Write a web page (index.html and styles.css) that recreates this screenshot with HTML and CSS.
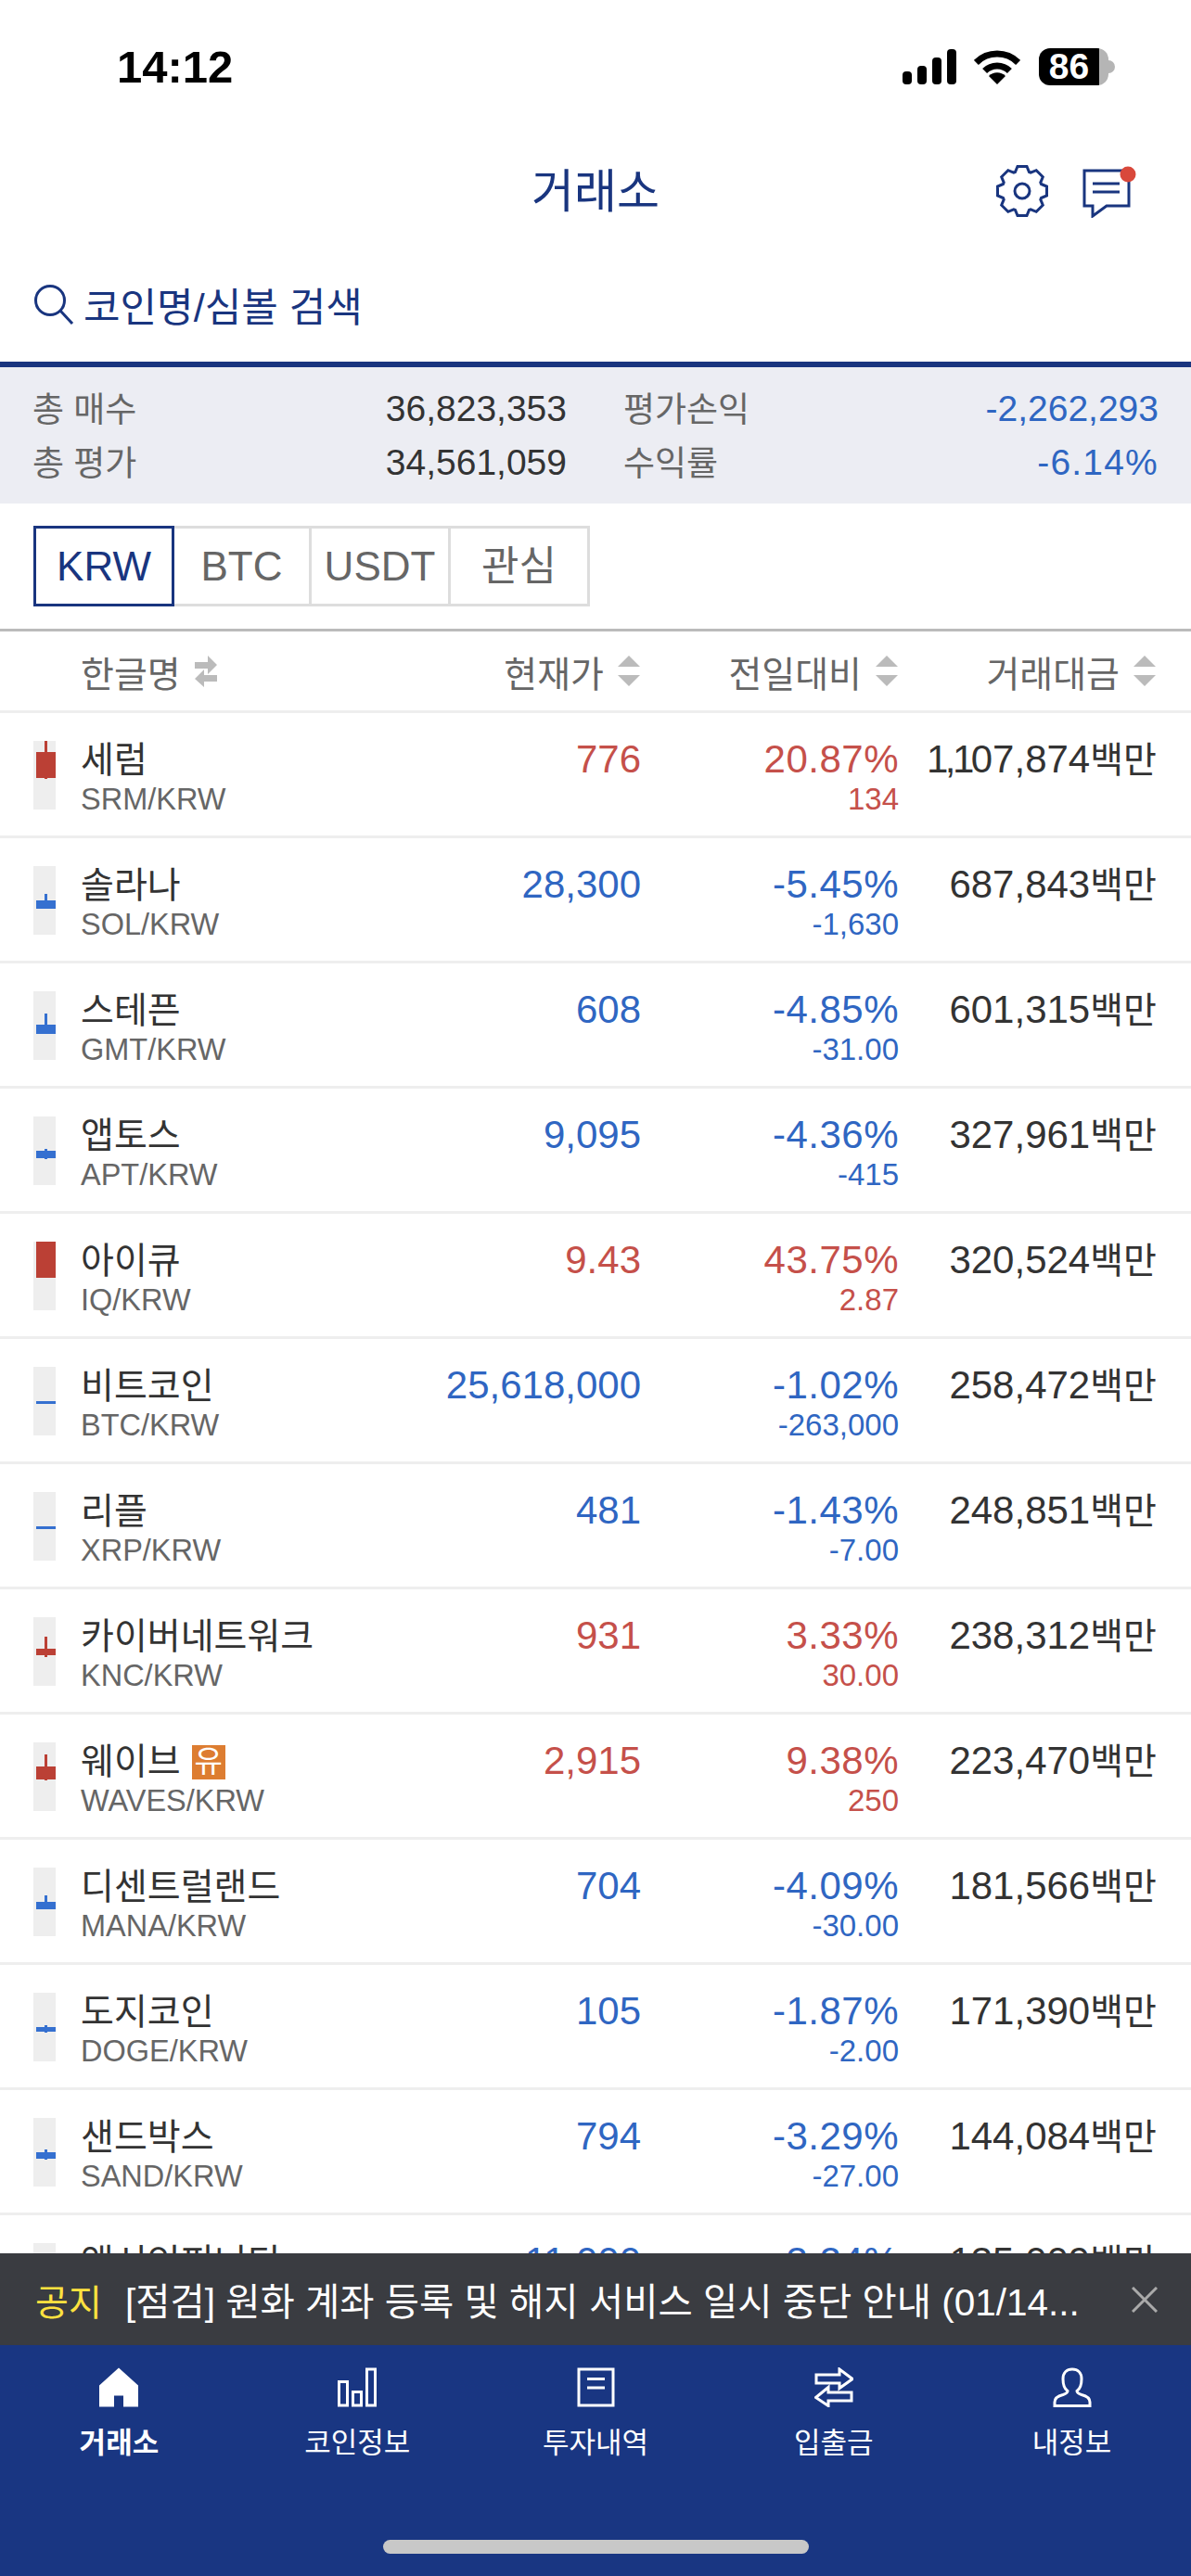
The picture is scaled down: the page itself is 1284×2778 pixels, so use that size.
FILE: index.html
```html
<!DOCTYPE html>
<html lang="ko">
	<head>
		<meta charset="UTF-8" />
		<meta name="viewport" content="width=device-width, initial-scale=1.0" />
		<title>거래소</title>
		<link rel="stylesheet" href="styles.css">
	</head>
	<body>
		<div class="status">
			<span class="time">14:12</span>
			<div class="status-icons">
				<div class="signal"><i></i><i></i><i></i><i></i></div>
				<svg class="wifi" viewBox="0 0 50 37">
					<path d="M2.4 13.4A32 32 0 0 1 47.6 13.4M11.6 22.6A19 19 0 0 1 38.4 22.6" fill="none" stroke="#000" stroke-width="7" />
					<path d="M25 37L16 28A12.7 12.7 0 0 1 34 28Z" fill="#000" />
				</svg>
				<div class="battery">86</div>
			</div>
		</div>

		<header class="topbar">
			<span></span>
			<h1>거래소</h1>
			<div class="actions">
				<svg class="gear" viewBox="-30 -30 60 60">
					<polygon points="-7.5,-20.5 -5,-26.5 5,-26.5 7.5,-20.5 9.19,-19.8 15.2,-22.27 22.27,-15.2 19.8,-9.19 20.5,-7.5 26.5,-5 26.5,5 20.5,7.5 19.8,9.19 22.27,15.2 15.2,22.27 9.19,19.8 7.5,20.5 5,26.5 -5,26.5 -7.5,20.5 -9.19,19.8 -15.2,22.27 -22.27,15.2 -19.8,9.19 -20.5,7.5 -26.5,5 -26.5,-5 -20.5,-7.5 -19.8,-9.19 -22.27,-15.2 -15.2,-22.27 -9.19,-19.8" />
					<circle r="8" />
				</svg>
				<svg class="chat" viewBox="0 0 58 56">
					<path class="line" d="M2 5H50V43H26L11 54V43H2Z" />
					<path class="line" d="M11 19H40M11 28H40" />
					<circle cx="49" cy="9" r="8.5" fill="#d9483b" />
				</svg>
			</div>
		</header>

		<div class="search">
			<svg class="search-icon" viewBox="0 0 44 44">
				<circle cx="18" cy="18" r="15.5" />
				<path d="M29 29L42 43" />
			</svg>
			<span>코인명/심볼 검색</span>
		</div>

		<section class="summary">
			<span class="label">총 매수</span><span class="value">36,823,353</span>
			<span class="label">평가손익</span><span class="value blue">-2,262,293</span>
			<span class="label">총 평가</span><span class="value">34,561,059</span>
			<span class="label">수익률</span><span class="value blue rate">-6.14%</span>
		</section>

		<nav class="tabs">
			<a class="tab active">KRW</a>
			<a class="tab">BTC</a>
			<a class="tab">USDT</a>
			<a class="tab">관심</a>
		</nav>

		<div class="list-head">
			<div class="head-name">한글명
				<svg class="swap" viewBox="0 0 24 34">
					<path d="M0 8H14V1L24 11L14 21V15H0Z" transform="translate(0 -1)" />
					<path d="M24 21H10V15L0 25L10 34V28H24Z" />
				</svg>
			</div>
			<div class="head-col">현재가<span class="sort"></span></div>
			<div class="head-col">전일대비<span class="sort"></span></div>
			<div class="head-col">거래대금<span class="sort"></span></div>
		</div>

		<div class="list">
			<div class="row up">
				<span class="candle"><i class="wick" style="top:0;height:41px"></i><i class="body" style="top:12px;height:28px"></i></span>
				<div class="coin"><span class="name">세럼</span><span class="symbol">SRM/KRW</span></div>
				<div class="price">776</div>
				<div class="change"><span class="pct">20.87%</span><span class="diff">134</span></div>
				<div class="amount"><span class="tight">1,1</span>07,874<span class="unit">백만</span></div>
			</div>
			<div class="row down">
				<span class="candle"><i class="wick" style="top:30px;height:16px"></i><i class="body" style="top:37px;height:9px"></i></span>
				<div class="coin"><span class="name">솔라나</span><span class="symbol">SOL/KRW</span></div>
				<div class="price">28,300</div>
				<div class="change"><span class="pct">-5.45%</span><span class="diff">-1,630</span></div>
				<div class="amount">687,843<span class="unit">백만</span></div>
			</div>
			<div class="row down">
				<span class="candle"><i class="wick" style="top:24px;height:22px"></i><i class="body" style="top:36px;height:10px"></i></span>
				<div class="coin"><span class="name">스테픈</span><span class="symbol">GMT/KRW</span></div>
				<div class="price">608</div>
				<div class="change"><span class="pct">-4.85%</span><span class="diff">-31.00</span></div>
				<div class="amount">601,315<span class="unit">백만</span></div>
			</div>
			<div class="row down">
				<span class="candle"><i class="wick" style="top:35px;height:11px"></i><i class="body" style="top:37px;height:8px"></i></span>
				<div class="coin"><span class="name">앱토스</span><span class="symbol">APT/KRW</span></div>
				<div class="price">9,095</div>
				<div class="change"><span class="pct">-4.36%</span><span class="diff">-415</span></div>
				<div class="amount">327,961<span class="unit">백만</span></div>
			</div>
			<div class="row up">
				<span class="candle"><i class="body" style="top:0;height:39px"></i></span>
				<div class="coin"><span class="name">아이큐</span><span class="symbol">IQ/KRW</span></div>
				<div class="price">9.43</div>
				<div class="change"><span class="pct">43.75%</span><span class="diff">2.87</span></div>
				<div class="amount">320,524<span class="unit">백만</span></div>
			</div>
			<div class="row down">
				<span class="candle"><i class="body" style="top:37px;height:3px"></i></span>
				<div class="coin"><span class="name">비트코인</span><span class="symbol">BTC/KRW</span></div>
				<div class="price">25,618,000</div>
				<div class="change"><span class="pct">-1.02%</span><span class="diff">-263,000</span></div>
				<div class="amount">258,472<span class="unit">백만</span></div>
			</div>
			<div class="row down">
				<span class="candle"><i class="body" style="top:37px;height:3px"></i></span>
				<div class="coin"><span class="name">리플</span><span class="symbol">XRP/KRW</span></div>
				<div class="price">481</div>
				<div class="change"><span class="pct">-1.43%</span><span class="diff">-7.00</span></div>
				<div class="amount">248,851<span class="unit">백만</span></div>
			</div>
			<div class="row up">
				<span class="candle"><i class="wick" style="top:21px;height:22px"></i><i class="body" style="top:34px;height:7px"></i></span>
				<div class="coin"><span class="name">카이버네트워크</span><span class="symbol">KNC/KRW</span></div>
				<div class="price">931</div>
				<div class="change"><span class="pct">3.33%</span><span class="diff">30.00</span></div>
				<div class="amount">238,312<span class="unit">백만</span></div>
			</div>
			<div class="row up">
				<span class="candle"><i class="wick" style="top:13px;height:28px"></i><i class="body" style="top:26px;height:14px"></i></span>
				<div class="coin"><span class="name">웨이브<em class="badge">유</em></span><span class="symbol">WAVES/KRW</span></div>
				<div class="price">2,915</div>
				<div class="change"><span class="pct">9.38%</span><span class="diff">250</span></div>
				<div class="amount">223,470<span class="unit">백만</span></div>
			</div>
			<div class="row down">
				<span class="candle"><i class="wick" style="top:30px;height:15px"></i><i class="body" style="top:37px;height:8px"></i></span>
				<div class="coin"><span class="name">디센트럴랜드</span><span class="symbol">MANA/KRW</span></div>
				<div class="price">704</div>
				<div class="change"><span class="pct">-4.09%</span><span class="diff">-30.00</span></div>
				<div class="amount">181,566<span class="unit">백만</span></div>
			</div>
			<div class="row down">
				<span class="candle"><i class="wick" style="top:35px;height:8px"></i><i class="body" style="top:37px;height:5px"></i></span>
				<div class="coin"><span class="name">도지코인</span><span class="symbol">DOGE/KRW</span></div>
				<div class="price">105</div>
				<div class="change"><span class="pct">-1.87%</span><span class="diff">-2.00</span></div>
				<div class="amount">171,390<span class="unit">백만</span></div>
			</div>
			<div class="row down">
				<span class="candle"><i class="wick" style="top:34px;height:11px"></i><i class="body" style="top:37px;height:7px"></i></span>
				<div class="coin"><span class="name">샌드박스</span><span class="symbol">SAND/KRW</span></div>
				<div class="price">794</div>
				<div class="change"><span class="pct">-3.29%</span><span class="diff">-27.00</span></div>
				<div class="amount">144,084<span class="unit">백만</span></div>
			</div>
			<div class="row down">
				<span class="candle"></span>
				<div class="coin"><span class="name">액시인피니티</span></div>
				<div class="price">11,000</div>
				<div class="change"><span class="pct">-3.24%</span></div>
				<div class="amount">135,009<span class="unit">백만</span></div>
			</div>
		</div>

		<footer class="dock">
			<div class="notice">
				<span class="notice-tag">공지</span>
				<span class="notice-text">[점검] 원화 계좌 등록 및 해지 서비스 일시 중단 안내 (01/14...</span>
				<svg class="notice-close" viewBox="0 0 28 28"><path d="M1 1L27 27M27 1L1 27" /></svg>
			</div>
			<nav class="tabbar">
				<a class="tabbar-item current">
					<svg class="nav-icon" viewBox="0 0 42 42"><path class="solid" d="M21 0L42 19V42H26V30H16V42H0V19Z" /></svg>
					거래소
				</a>
				<a class="tabbar-item">
					<svg class="nav-icon" viewBox="0 0 42 42"><path d="M1.5 15H10.5V40.5H1.5ZM16.5 26H25.5V40.5H16.5ZM31.5 1.5H40.5V40.5H31.5Z" /></svg>
					코인정보
				</a>
				<a class="tabbar-item">
					<svg class="nav-icon" viewBox="0 0 42 42"><path d="M3 1.5H40V40.5H3ZM12 12H31M12 21.500H31" /></svg>
					투자내역
				</a>
				<a class="tabbar-item">
					<svg class="nav-icon" viewBox="0 0 42 42"><path d="M2 7.500H27V1.500L41 12L27 22V16.500H2ZM40 26.500H15V21L1.500 32L15 41V35.500H40Z" /></svg>
					입출금
				</a>
				<a class="tabbar-item">
					<svg class="nav-icon" viewBox="0 0 42 42"><path d="M2 41H40V37C40 32 35 30 31 29C28 28 26 27 26 25C29 23 31 18 31 12C31 5.500 27 1.500 21 1.500S11 5.500 11 12C11 18 13 23 16 25C16 27 14 28 11 29C7 30 2 32 2 37Z" /></svg>
					내정보
				</a>
			</nav>
			<div class="home-bar"></div>
		</footer>
	</body>
</html>
```

FILE: styles.css
```css
* {
	box-sizing: border-box;
}
html,
body {
	height: 2778px;
}
body {
	margin: 0;
	position: relative;
	overflow: hidden;
	background-color: #fff;
	color: #333;
	font-family: "Liberation Sans", "Noto Sans CJK KR", sans-serif;
}
/* status bar */
.status {
	height: 140px;
	padding: 48px 89px 0 126px;
	display: flex;
	justify-content: space-between;
	align-items: flex-start;
}
.time {
	color: #000;
	font-size: 49px;
	font-weight: bold;
	line-height: 48px;
}
.status-icons {
	display: flex;
	align-items: center;
	padding-top: 4px;
}
.signal {
	display: flex;
	align-items: flex-end;
	gap: 6px;
	height: 38px;
}
.signal i {
	display: block;
	width: 10px;
	background-color: #000;
	border-radius: 4px;
}
.signal i:nth-child(1) {
	height: 14px;
}
.signal i:nth-child(2) {
	height: 20px;
}
.signal i:nth-child(3) {
	height: 29px;
}
.signal i:nth-child(4) {
	height: 38px;
}
.wifi {
	width: 50px;
	height: 37px;
	margin-left: 19px;
}
.battery {
	position: relative;
	width: 75px;
	height: 40px;
	margin-left: 20px;
	padding-right: 10px;
	border-radius: 12px;
	background: linear-gradient(90deg, #000 65px, #b5b5b5 65px);
	color: #fff;
	font-size: 39px;
	font-weight: bold;
	line-height: 40px;
	text-align: center;
}
.battery::after {
	content: "";
	position: absolute;
	top: 13px;
	right: -7px;
	width: 7px;
	height: 14px;
	background-color: #b5b5b5;
	border-radius: 0 7px 7px 0;
}
/* title */
.topbar {
	height: 130px;
	display: grid;
	grid-template-columns: 1fr auto 1fr;
	align-items: center;
}
.topbar h1 {
	margin: 0;
	padding-top: 4px;
	color: #19357f;
	font-size: 50px;
	font-weight: normal;
	line-height: 126px;
}
.actions {
	display: flex;
	justify-content: flex-end;
	align-items: center;
	padding-right: 59px;
	gap: 35px;
}
.gear {
	width: 60px;
	height: 60px;
	margin-top: 2px;
	fill: none;
	stroke: #19357f;
	stroke-width: 3;
}
.chat {
	width: 58px;
	height: 56px;
	margin-top: 4px;
}
.line {
	fill: none;
	stroke: #19357f;
	stroke-width: 3;
}
/* search */
.search {
	height: 126px;
	padding: 0 0 4px 36px;
	display: flex;
	align-items: center;
	gap: 10px;
	border-bottom: 6px solid #19357f;
	color: #19357f;
	font-size: 43px;
}
.search-icon {
	width: 44px;
	height: 44px;
	fill: none;
	stroke: #19357f;
	stroke-width: 3;
}
/* totals */
.summary {
	height: 147px;
	padding: 16px 35px 0 35px;
	display: grid;
	grid-template-columns: 161px 415px 140px 1fr;
	grid-auto-rows: 58px;
	align-items: center;
	background-color: #ecedf3;
	font-size: 39px;
}
.summary .label {
	padding-bottom: 4px;
	color: #666;
	font-size: 37px;
}
.summary .label:nth-child(4n + 3) {
	padding-left: 61px;
	white-space: nowrap;
}
.summary .value {
	text-align: right;
}
.summary .blue {
	color: #2f66c2;
}
.summary .rate {
	letter-spacing: 1.2px;
}
/* market tabs */
.tabs {
	display: flex;
	width: 600px;
	height: 87px;
	margin: 24px 0 24px 36px;
}
.tab {
	flex: 0 0 150px;
	height: 87px;
	border: 3px solid #ddd;
	border-left-width: 0;
	color: #666;
	font-size: 44px;
	line-height: 81px;
	text-align: center;
}
.tab.active {
	flex-basis: 152px;
	border: 3px solid #19357f;
	color: #19357f;
}
.tab:nth-child(2) {
	flex-basis: 148px;
}
/* list */
.list-head {
	height: 91px;
	padding: 0 38px 0 87px;
	display: grid;
	grid-template-columns: 1fr 278px 278px 278px;
	align-items: center;
	border-top: 3px solid #bbb;
	border-bottom: 3px solid #eee;
	color: #666;
	font-size: 39px;
}
.head-name {
	display: flex;
	align-items: center;
	gap: 15px;
}
.swap {
	width: 24px;
	height: 34px;
	fill: #bbb;
}
.head-col {
	display: flex;
	justify-content: flex-end;
	align-items: center;
	gap: 15px;
}
.sort {
	display: block;
	width: 24px;
	height: 33px;
	position: relative;
}
.sort::before,
.sort::after {
	content: "";
	position: absolute;
	left: 0;
	border-left: 12px solid transparent;
	border-right: 12px solid transparent;
}
.sort::before {
	top: 0;
	border-bottom: 12px solid #bbb;
}
.sort::after {
	bottom: 0;
	border-top: 12px solid #bbb;
}
.list {
	height: 1661px;
	overflow: hidden;
}
.row {
	height: 135px;
	padding: 29px 37px 0 36px;
	display: grid;
	grid-template-columns: 51px 1fr 261px 278px 278px;
	align-items: start;
	border-bottom: 3px solid #eee;
}
.candle {
	display: block;
	position: relative;
	width: 24px;
	height: 74px;
	margin-top: 1px;
	background-color: #eee;
}
.candle i {
	position: absolute;
	display: block;
}
.candle .body {
	left: 3px;
	width: 21px;
}
.candle .wick {
	left: 12px;
	width: 3px;
}
.up .candle i {
	background-color: #bb4035;
}
.down .candle i {
	background-color: #3570d0;
}
.coin,
.change {
	display: flex;
	flex-direction: column;
}
.change {
	align-items: flex-end;
}
.name {
	display: flex;
	align-items: center;
	font-size: 39px;
	line-height: 44px;
}
.symbol {
	color: #666;
	font-size: 32.5px;
	line-height: 40px;
}
.badge {
	width: 36px;
	height: 37px;
	margin-left: 12px;
	background-color: #dd7d31;
	color: #fff;
	font-size: 33px;
	font-style: normal;
	line-height: 35px;
	text-align: center;
}
.price,
.pct,
.amount {
	font-size: 42px;
	line-height: 42px;
	text-align: right;
}
.pct {
	letter-spacing: 0.5px;
}
.diff {
	margin-top: 2px;
	font-size: 33px;
	line-height: 40px;
}
.unit {
	font-size: 39px;
}
.tight {
	letter-spacing: -3.5px;
}
.up .price,
.up .change {
	color: #c5504a;
}
.down .price,
.down .change {
	color: #2f66c2;
}
/* bottom */
.dock {
	position: absolute;
	left: 0;
	right: 0;
	bottom: 0;
	height: 348px;
	background-color: #193682;
}
.notice {
	height: 99px;
	padding: 0 36px 0 38px;
	display: flex;
	align-items: center;
	background-color: #3a3c41;
	color: #fff;
	font-size: 40.500px;
}
.notice-tag {
	width: 97px;
	flex: none;
	color: #ffe23f;
	font-size: 39px;
}
.notice-text {
	flex: 1;
	white-space: nowrap;
}
.notice-close {
	width: 28px;
	height: 28px;
	fill: none;
	stroke: #aaa;
	stroke-width: 3;
}
.tabbar {
	display: flex;
	padding-top: 24px;
}
.tabbar-item {
	flex: 1;
	display: flex;
	flex-direction: column;
	align-items: center;
	gap: 19px;
	color: #fff;
	font-size: 31px;
	line-height: 40px;
}
.tabbar-item.current {
	font-weight: bold;
}
.nav-icon {
	width: 42px;
	height: 43px;
	fill: none;
	stroke: #fff;
	stroke-width: 3;
}
.nav-icon .solid {
	fill: #fff;
	stroke: none;
}
.home-bar {
	position: absolute;
	left: 413px;
	bottom: 24px;
	width: 459px;
	height: 15px;
	background-color: #c8c8c8;
	border-radius: 8px;
}
```
